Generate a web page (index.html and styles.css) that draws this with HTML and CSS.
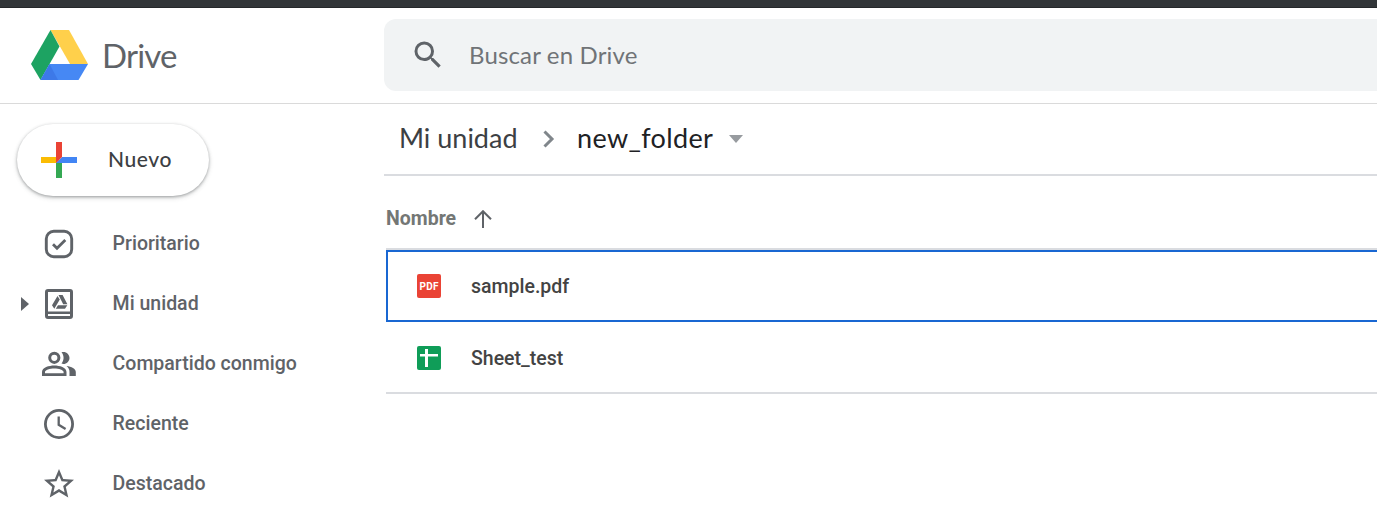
FILE: index.html
```html
<!DOCTYPE html>
<html lang="es">
<head>
<meta charset="utf-8">
<title>new_folder - Drive</title>
<link rel="stylesheet" href="styles.css">
</head>
<body>
<div class="browser-edge"></div>
<header class="header">
  <a class="brand">
    <svg class="brand-logo" viewBox="0 0 57 50">
      <path fill="#ffd04b" d="M19.500 0h18.500L57 34H39z"/>
      <path fill="#1da362" d="M19.500 0l9 16.500L9.500 50 0 34z"/>
      <path fill="#4688f4" d="M18.500 34H57l-9.500 16h-38z"/>
      <path fill="#3d79e8" d="M18.500 34L27 50H9.500z"/>
    </svg>
    <span class="brand-name">Drive</span>
  </a>
  <div class="search">
    <svg class="icon" viewBox="0 0 24 24"><path d="M15.500 14h-.79l-.28-.27A6.470 6.470 0 0 0 16 9.500 6.500 6.500 0 1 0 9.500 16c1.610 0 3.090-.59 4.230-1.570l.27.28v.79l5 4.990L20.490 19l-4.990-5zm-6 0C7.010 14 5 11.990 5 9.500S7.010 5 9.500 5 14 7.010 14 9.500 11.990 14 9.500 14z"/></svg>
    <span class="search-hint">Buscar en Drive</span>
  </div>
</header>
<div class="layout">
  <aside class="sidebar">
    <button class="new-button">
      <svg class="plus" viewBox="0 0 36 36">
        <path fill="#fbbc04" d="M0 15h18l-3 6H0z"/>
        <path fill="#34a853" d="M15 21l3-3 3 3v15h-6z"/>
        <path fill="#4285f4" d="M21 15h15v6H15z"/>
        <path fill="#ea4335" d="M15 0h6v15l-6 6z"/>
      </svg>
      <span class="new-label">Nuevo</span>
    </button>
    <nav class="nav">
      <a class="nav-item">
        <svg class="icon" viewBox="0 0 36 36"><rect x="5.300" y="5.300" width="25.400" height="25.400" rx="7.500" fill="none" stroke="#5f6368" stroke-width="2.900"/><path d="M12 18.300l4 4 8.300-8.300" fill="none" stroke="#5f6368" stroke-width="2.800"/></svg>
        <span class="nav-label">Prioritario</span>
      </a>
      <a class="nav-item">
        <svg class="expander" viewBox="0 0 8 14"><path d="M0 0l8 7-8 7z"/></svg>
        <svg class="icon" viewBox="0 0 36 36"><path fill-rule="evenodd" d="M7 3h22a3 3 0 0 1 3 3v24a3 3 0 0 1-3 3H7a3 3 0 0 1-3-3V6a3 3 0 0 1 3-3zM7 6v19.500h22V6zM7 28v2h22v-2z"/><path d="M16.500 10L11 19.300l2.300 3.500 5.500-9.300zM17.500 9h4.100l4.800 9.300h-4.200zM17 19.300h9.300L24 22.800h-9.200z"/></svg>
        <span class="nav-label">Mi unidad</span>
      </a>
      <a class="nav-item">
        <svg class="icon" viewBox="0 0 36 36"><circle cx="13.300" cy="11.800" r="4.600" fill="none" stroke="#5f6368" stroke-width="3"/><path d="M20.500 6.300c4-1.500 8 1.700 8 5.600s-4 7-8 5.700c2.800-3.600 2.800-7.700 0-11.300z"/><path fill-rule="evenodd" d="M1 30v-4c0-4.500 7-6.500 12.300-6.500S25.500 21.500 25.500 26v4zM4 27.200h18.600V26c0-2-4.800-3.600-9.300-3.600S4 24 4 26z"/><path d="M25.500 20c5 .6 9.300 2.800 9.300 6v4h-6.300v-4c0-2.500-1-4.500-3-6z"/></svg>
        <span class="nav-label">Compartido conmigo</span>
      </a>
      <a class="nav-item">
        <svg class="icon" viewBox="0 0 36 36"><circle cx="18" cy="18" r="13.600" fill="none" stroke="#5f6368" stroke-width="2.800"/><path d="M17.700 10.500v8.300l6.900 4.200" fill="none" stroke="#5f6368" stroke-width="2.300"/></svg>
        <span class="nav-label">Reciente</span>
      </a>
      <a class="nav-item">
        <svg class="icon" viewBox="0 .5 24 24"><path d="M22 9.740l-7.190-.62L12 2.500 9.190 9.130 2 9.740l5.460 4.730-1.640 7.030L12 17.770l6.180 3.730-1.630-7.030zm-10 6.160l-3.760 2.270 1-4.280-3.320-2.880 4.380-.38L12 6.600l1.710 4.040 4.380.38-3.320 2.880 1 4.280z"/></svg>
        <span class="nav-label">Destacado</span>
      </a>
    </nav>
  </aside>
  <main class="content">
    <div class="breadcrumb">
      <span class="crumb">Mi unidad</span>
      <svg class="chevron" viewBox="0 0 12 18"><path d="M1.500 1.500L9 9l-7.500 7.500"/></svg>
      <span class="crumb crumb-current">new_folder</span>
      <svg class="caret" viewBox="0 0 14 8"><path d="M0 0h14L7 8z"/></svg>
    </div>
    <div class="files">
      <div class="list-head">
        <span class="list-title">Nombre</span>
        <svg class="arrow" viewBox="0 0 18 18"><path d="M9 18V1.500M1 9.200l8-8 8 8"/></svg>
      </div>
      <div class="file file-selected">
        <svg class="file-icon" viewBox="0 0 24 24"><rect width="24" height="24" rx="2" fill="#ea4335"/><text class="pdf-label" x="12" y="15.800" text-anchor="middle" textLength="19">PDF</text></svg>
        <span>sample.pdf</span>
      </div>
      <div class="file">
        <svg class="file-icon" viewBox="0 0 24 24"><rect width="24" height="24" rx="2" fill="#0f9d58"/><path fill="#fff" d="M8 3h3v5h10v2.500H11V21H8V10.500H3V8h5z"/></svg>
        <span>Sheet_test</span>
      </div>
    </div>
  </main>
</div>
</body>
</html>
```

FILE: styles.css
```css
* { box-sizing: border-box; }
body {
  margin: 0;
  height: 516px;
  overflow: hidden;
  background: #fff;
  color: #5f6368;
  font-family: Roboto, sans-serif;
}
svg { display: block; flex: none; }
.browser-edge {
  height: 8px;
  background: #323639;
  border-bottom: 1px solid #25282b;
}
.header {
  display: flex;
  height: 96px;
  border-bottom: 1px solid #dadada;
}
.brand {
  display: flex;
  align-items: center;
  width: 384px;
  padding: 0 0 2px 31px;
}
.brand-logo { width: 57px; height: 50px; }
.brand-name {
  margin-left: 14px;
  font: 33px/40px Lato, sans-serif;
  letter-spacing: -.8px;
}
.search {
  display: flex;
  flex: 1;
  align-items: center;
  height: 72px;
  margin-top: 11px;
  padding-left: 26px;
  border-radius: 12px 0 0 12px;
  background: #f1f3f4;
}
.icon { width: 36px; height: 36px; fill: #5f6368; }
.search-hint {
  margin-left: 23px;
  color: #707377;
  font: 24px/30px Lato, sans-serif;
  letter-spacing: .15px;
}
.layout { display: flex; }
.sidebar { width: 384px; padding-top: 20px; }
.new-button {
  display: flex;
  align-items: center;
  width: 192px;
  height: 72px;
  margin-left: 17px;
  padding: 0 0 0 24px;
  border: 0;
  border-radius: 36px;
  background: #fff;
  box-shadow: 0 1px 3px rgba(60, 64, 67, .4), 0 2px 5px rgba(60, 64, 67, .18);
}
.plus { width: 36px; height: 36px; }
.new-label {
  margin: -3px 0 0 31px;
  color: #3c4043;
  font: 500 21px/28px Lato, sans-serif;
  letter-spacing: .6px;
}
.nav { padding-top: 18px; }
.nav-item {
  display: flex;
  align-items: center;
  height: 60px;
  padding-left: 41px;
}
.expander {
  width: 8px;
  height: 14px;
  margin: 0 12px 0 -20px;
  fill: #5f6368;
}
.nav-label {
  margin: -2px 0 0 35.6px;
  font-size: 19.5px;
  font-weight: 500;
}
.content { flex: 1; }
.breadcrumb {
  display: flex;
  align-items: center;
  height: 72px;
  padding-left: 15px;
  border-bottom: 2px solid #dadce0;
}
.crumb {
  width: 118px;
  margin-top: -2px;
  color: #3c4043;
  font: 27px/36px Lato, sans-serif;
  white-space: nowrap;
}
.crumb-current { width: 135px; color: #202124; letter-spacing: .35px; }
.chevron {
  width: 12px;
  height: 18px;
  margin: 0 22px 0 26px;
  fill: none;
  stroke: #80868b;
  stroke-width: 3;
}
.caret { width: 14px; height: 8px; margin-left: 17px; fill: #979b9f; }
.files { padding-left: 2px; }
.list-head {
  display: flex;
  align-items: center;
  height: 74px;
  padding-top: 12px;
  border-bottom: 2px solid #dadce0;
}
.list-title { color: #747775; font-size: 19.5px; font-weight: 700; }
.arrow {
  width: 18px;
  height: 18px;
  margin: 1px 0 0 17.5px;
  fill: none;
  stroke: #5f6368;
  stroke-width: 2;
}
.file {
  display: flex;
  align-items: center;
  height: 72px;
  padding: 2px 0 0 31px;
  border-bottom: 2px solid #dadce0;
  color: #434343;
  font-size: 19.5px;
  font-weight: 500;
}
.file-selected {
  padding: 0 0 0 29px;
  border: 2px solid #1967d2;
  border-right: 0;
}
.file-icon { width: 24px; height: 24px; margin-right: 30px; }
.pdf-label { fill: #fff; font: 700 10px Roboto, sans-serif; }
```
